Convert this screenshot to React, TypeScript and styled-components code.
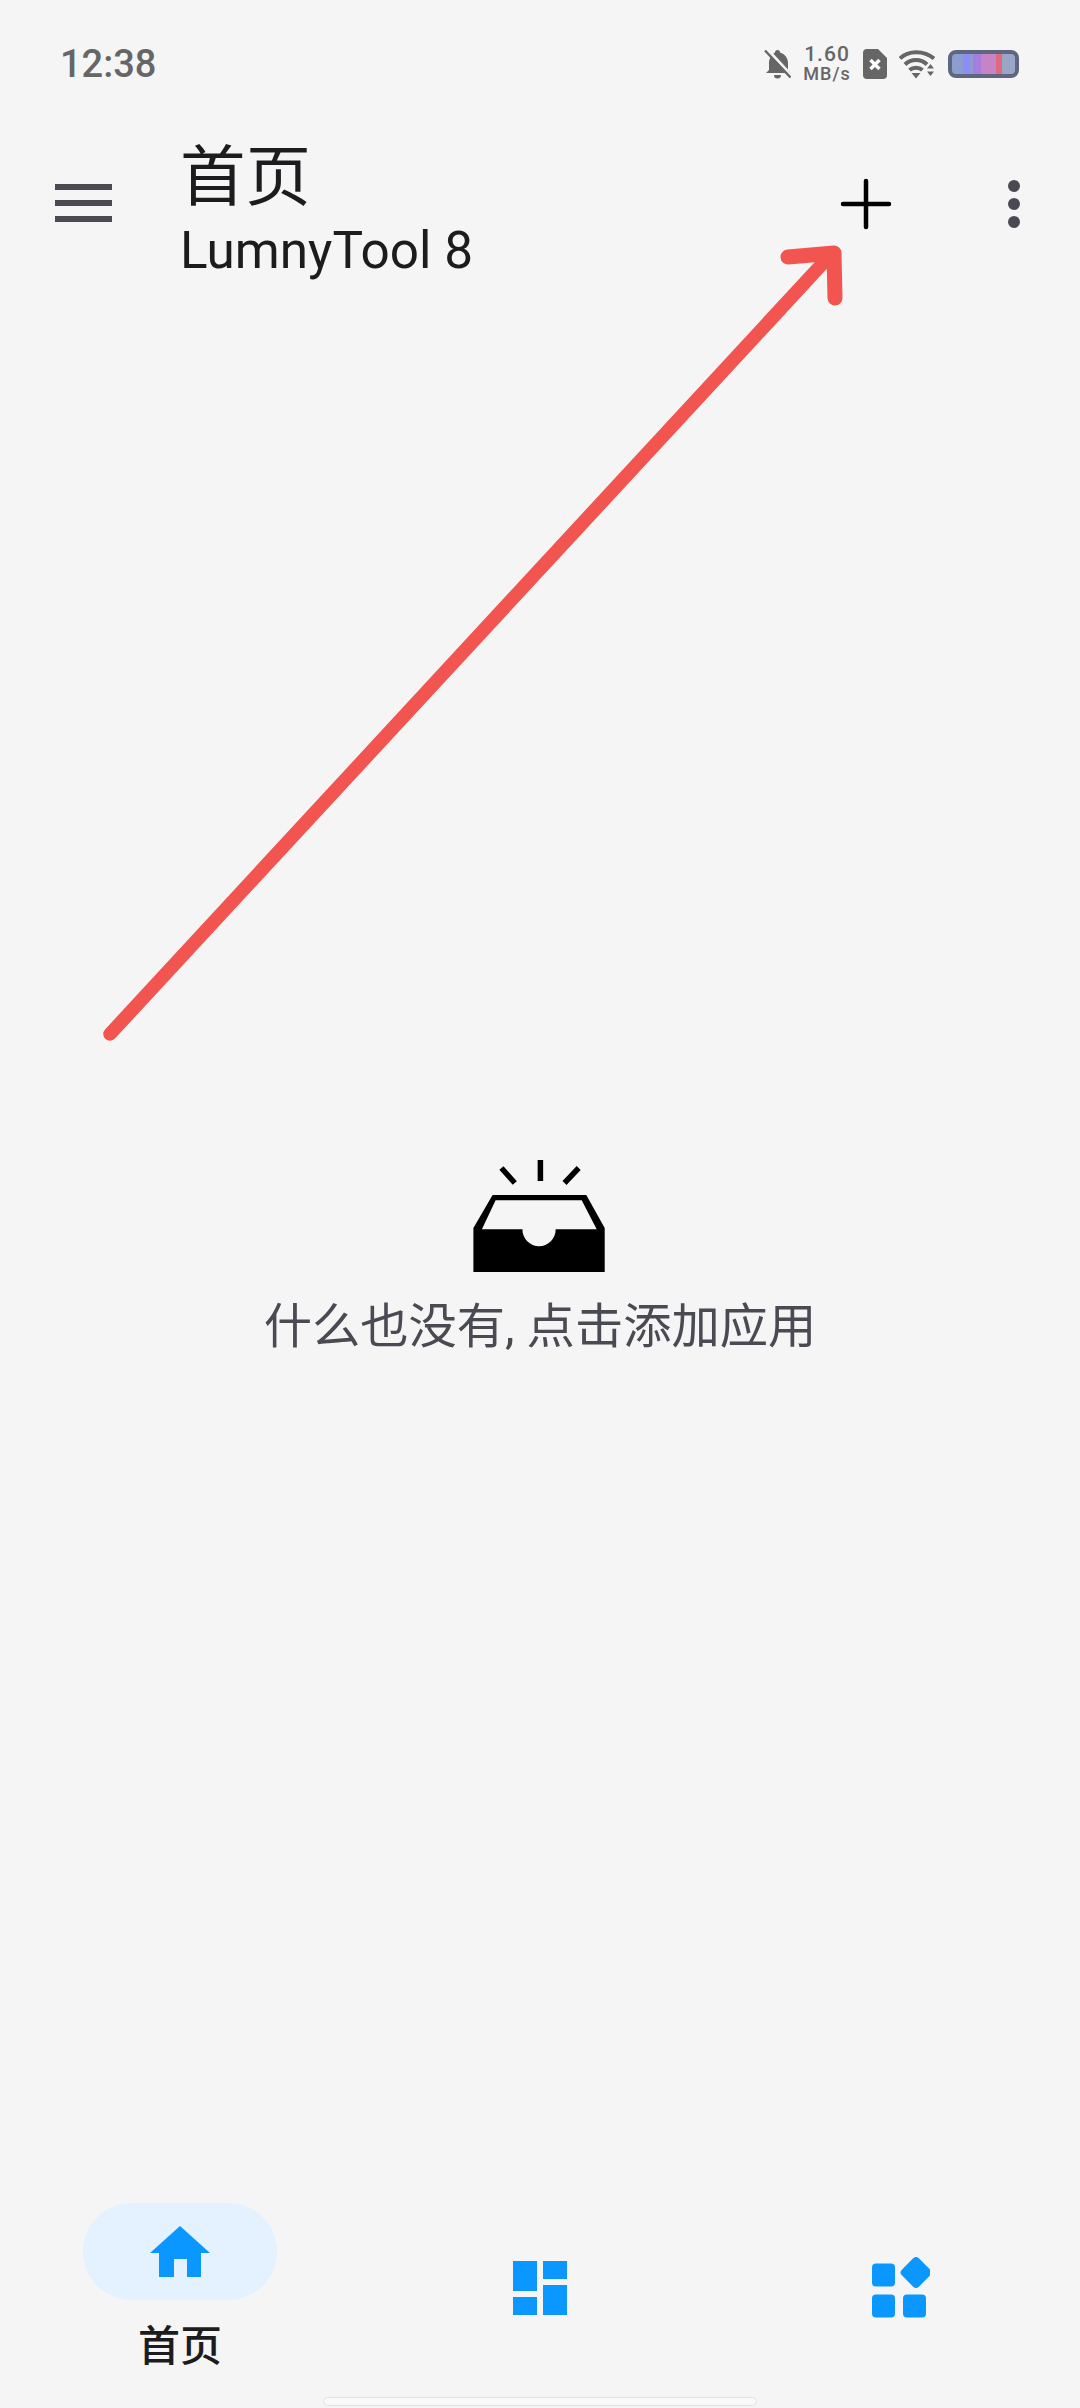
import React from 'react';
import styled, { createGlobalStyle } from 'styled-components';

const Global = createGlobalStyle`
	html, body { margin: 0; padding: 0; background: #f5f5f6; }
	* { box-sizing: border-box; }
`;

const Page = styled.div`
	position: relative;
	width: 1080px;
	height: 2408px;
	display: flex;
	flex-direction: column;
	overflow: hidden;
	background: #f5f5f6;
	font-family: Roboto, "Noto Sans CJK SC", sans-serif;
`;

const StatusBar = styled.div`
	display: flex;
	align-items: center;
	justify-content: space-between;
	height: 126px;
	padding: 1px 61px 0 60px;
`;

const Time = styled.span`
	font-size: 38px;
	font-weight: 500;
	color: #666;
`;

const StatusIcons = styled.div`
	display: flex;
	align-items: center;
	gap: 12px;
`;

const Speed = styled.div`
	display: flex;
	flex-direction: column;
	align-items: center;
	width: 48px;
	color: #666;
	font-weight: 500;
`;

const SpeedValue = styled.span`
	font-size: 21px;
	line-height: 21px;
	letter-spacing: 1px;
`;

const SpeedUnit = styled.span`
	font-size: 18px;
	line-height: 18px;
	letter-spacing: 1px;
	white-space: nowrap;
`;

const Battery = styled.div`
	width: 71px;
	height: 28px;
	border: 4px solid #5f667f;
	border-radius: 8px;
	background: linear-gradient(
		90deg,
		#8b9dcc 0 17%,
		#8e8cf6 17% 28%,
		#8f9bd0 28% 34%,
		#a67cdc 34% 46%,
		#c584c6 46% 70%,
		#dd6a80 70% 79%,
		#9aa6c6 79% 100%
	);
`;

const TopBar = styled.header`
	display: flex;
	align-items: flex-start;
	padding: 0 60px 0 55px;
`;

const Menu = styled.div`
	display: flex;
	flex-direction: column;
	gap: 10px;
	width: 57px;
	margin-top: 58px;
	margin-right: 68px;
`;

const MenuBar = styled.span`
	display: block;
	height: 6px;
	background: #4a4a52;
`;

const Titles = styled.div`
	flex: 1;
	display: flex;
	flex-direction: column;
	padding-top: 8px;
	color: #1c1c1e;
`;

const Title = styled.h1`
	margin: 0;
	font-size: 65.5px;
	font-weight: 400;
	line-height: 87px;
`;

const Subtitle = styled.div`
	margin-top: 2px;
	font-size: 51.3px;
	line-height: 56px;
`;

const Actions = styled.div`
	display: flex;
	align-items: center;
	gap: 116px;
	margin-top: 52px;
`;

const Dots = styled.div`
	display: flex;
	flex-direction: column;
	gap: 6px;
`;

const Dot = styled.span`
	width: 12px;
	height: 12px;
	border-radius: 50%;
	background: #4a4a52;
`;

const Main = styled.main`
	flex: 1;
	display: flex;
	flex-direction: column;
	align-items: center;
	padding-top: 881px;
`;

const EmptyText = styled.p`
	margin: 24px 0 0;
	font-size: 48.3px;
	line-height: 62px;
	color: #4a4a52;
`;

const BottomNav = styled.nav`
	display: grid;
	grid-template-columns: repeat(3, 360px);
	grid-template-rows: 169px;
	height: 205px;
`;

const NavItem = styled.div<{ $active?: boolean }>`
	display: flex;
	flex-direction: column;
	align-items: center;
	align-self: ${({ $active }) => ($active ? 'start' : 'center')};
`;

const Pill = styled.div<{ $active?: boolean }>`
	display: flex;
	align-items: center;
	justify-content: center;
	width: 194px;
	height: 97px;
	border-radius: 49px;
	background: ${({ $active }) => ($active ? '#e3f2fe' : 'transparent')};
`;

const NavLabel = styled.span`
	margin-top: 22px;
	font-size: 42px;
	line-height: 50px;
	font-weight: 500;
	color: #1c1c1e;
`;

const GestureWrap = styled.div`
	position: absolute;
	left: 0;
	right: 0;
	bottom: 2px;
	display: flex;
	justify-content: center;
`;

const GestureBar = styled.div`
	width: 434px;
	height: 9px;
	border-radius: 5px;
	background: #f9f9f9;
	border: 1.5px solid #e2e2e2;
`;

const Annotation = styled.svg`
	position: absolute;
	left: 0;
	top: 0;
	pointer-events: none;
`;

const BellOffIcon = () => (
	<svg width="27" height="30" viewBox="0 0 27 30">
		<path
			fill="#666"
			d="M13.5 1a2.500 2.500 0 0 1 2.500 2.500C21 5 24 9 24 14v7l3 3H2l3-3v-7C5 9 8 5 11 3.500A2.500 2.500 0 0 1 13.500 1zM10 26h7a3.500 3.500 0 0 1-7 0z"
		/>
		<path stroke="#f5f5f6" strokeWidth="3" d="M3 0l26 28" />
		<path stroke="#666" strokeWidth="2.400" d="M1 1.500l25.500 27" />
	</svg>
);

const SimIcon = () => (
	<svg width="24" height="30" viewBox="0 0 24 30">
		<path fill="#666" d="M4 0h11l9 9v17a4 4 0 0 1-4 4H4a4 4 0 0 1-4-4V4a4 4 0 0 1 4-4z" />
		<path stroke="#fff" strokeWidth="3.400" d="M7.500 11l9 9M16.500 11l-9 9" />
	</svg>
);

const WifiIcon = () => (
	<svg width="37" height="30" viewBox="0 0 37 30" fill="none">
		<path stroke="#666" strokeWidth="4" d="M1 9.500C9 1 25 1 35 9.500" />
		<path stroke="#666" strokeWidth="4" d="M6 15.500C12 9.500 22 9.500 28 15.500" />
		<path stroke="#666" strokeWidth="4" d="M10.500 21C14 18 20 18 23.500 21" />
		<path fill="#666" d="M12.500 24h9L17 29.500zM28 19.500l3.500-4.500 3.500 4.500zM28 22.500h7l-3.500 4.500z" />
	</svg>
);

const InboxIcon = () => (
	<svg width="136" height="112" viewBox="472 1160 136 112">
		<path stroke="#000" strokeWidth="5.500" d="M540.400 1160v21M501.400 1168l13.400 15M578.700 1168l-14.200 15" />
		<path
			fillRule="evenodd"
			d="M492.600 1195h93.700l18.400 33v44H473.400v-44zM495.600 1200.300l-13.700 29h40.500a16.650 17 0 0 0 33.300 0h41l-15-29z"
		/>
	</svg>
);

const HomeIcon = () => (
	<svg width="60" height="51" viewBox="0 0 60 51">
		<path fill="#0a97ff" d="M30 0l30 27h-9v24H37V33H24v18H9V27H0z" />
	</svg>
);

const DashboardIcon = () => (
	<svg width="54" height="54" viewBox="0 0 54 54" fill="#0a97ff">
		<rect x="0" y="0" width="24" height="30" />
		<rect x="30" y="0" width="24" height="18" />
		<rect x="0" y="36" width="24" height="18" />
		<rect x="30" y="24" width="24" height="30" />
	</svg>
);

const WidgetsIcon = () => (
	<svg width="60" height="61" viewBox="-2 0 60 61" fill="#0a97ff">
		<rect x="0" y="6.500" width="23" height="23" rx="4" />
		<rect x="0" y="37.500" width="23" height="23" rx="4" />
		<rect x="31" y="37.500" width="23" height="23" rx="4" />
		<rect x="32" y="3.500" width="24" height="24" rx="4" transform="rotate(45 44 15.500)" />
	</svg>
);

export default function App() {
	return (
		<Page>
			<Global />
			<StatusBar>
				<Time>12:38</Time>
				<StatusIcons>
					<BellOffIcon />
					<Speed>
						<SpeedValue>1.60</SpeedValue>
						<SpeedUnit>MB/s</SpeedUnit>
					</Speed>
					<SimIcon />
					<WifiIcon />
					<Battery />
				</StatusIcons>
			</StatusBar>
			<TopBar>
				<Menu>
					<MenuBar />
					<MenuBar />
					<MenuBar />
				</Menu>
				<Titles>
					<Title>首页</Title>
					<Subtitle>LumnyTool 8</Subtitle>
				</Titles>
				<Actions>
					<svg width="52" height="52" viewBox="0 0 52 52">
						<path stroke="#000" strokeWidth="4.500" strokeLinecap="round" d="M26 3v46M3 26h46" />
					</svg>
					<Dots>
						<Dot />
						<Dot />
						<Dot />
					</Dots>
				</Actions>
			</TopBar>
			<Main>
				<InboxIcon />
				<EmptyText>什么也没有, 点击添加应用</EmptyText>
			</Main>
			<BottomNav>
				<NavItem $active>
					<Pill $active>
						<HomeIcon />
					</Pill>
					<NavLabel>首页</NavLabel>
				</NavItem>
				<NavItem>
					<Pill>
						<DashboardIcon />
					</Pill>
				</NavItem>
				<NavItem>
					<Pill>
						<WidgetsIcon />
					</Pill>
				</NavItem>
			</BottomNav>
			<GestureWrap>
				<GestureBar />
			</GestureWrap>
			<Annotation width="1080" height="2408" viewBox="0 0 1080 2408" fill="none">
				<path stroke="#f2544f" strokeWidth="13.500" strokeLinecap="round" d="M110 1034L824 262" />
				<path stroke="#f2544f" strokeWidth="15" strokeLinecap="round" strokeLinejoin="round" d="M788 257l46-4 1 45" />
			</Annotation>
		</Page>
	);
}
